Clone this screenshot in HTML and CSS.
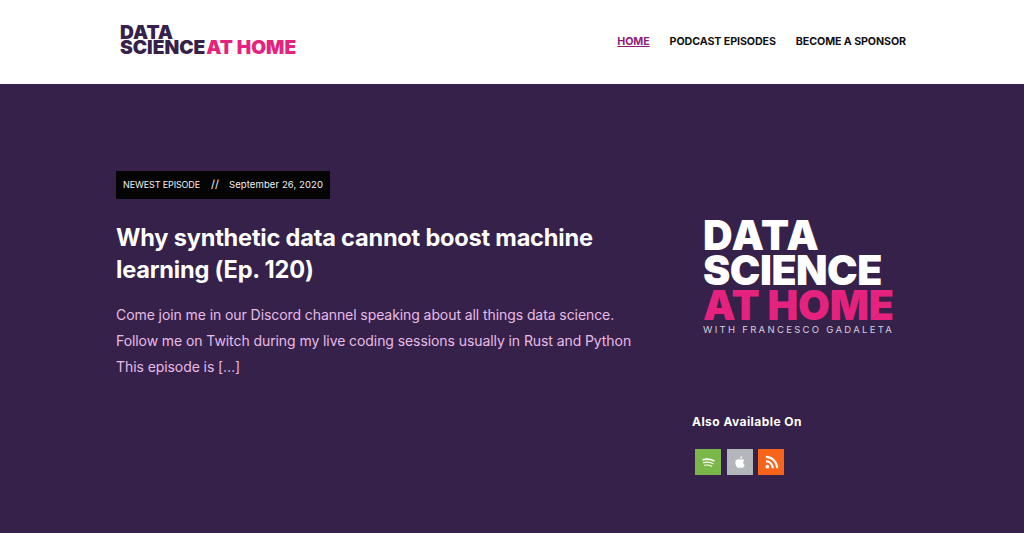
FILE: index.html
```html
<!DOCTYPE html>
<html lang="en">
<head>
<meta charset="utf-8">
<title>Data Science at Home</title>
<link rel="stylesheet" href="styles.css">
</head>
<body>
<header class="site-header">
  <a class="brand" href="#">
    <span class="brand-line">DATA</span>
    <span class="brand-line">SCIENCE<span class="brand-pink">AT HOME</span></span>
  </a>
  <nav class="nav">
    <a class="nav-link nav-current" href="#">HOME</a>
    <a class="nav-link" href="#">PODCAST EPISODES</a>
    <a class="nav-link" href="#">BECOME A SPONSOR</a>
  </nav>
</header>
<main class="hero">
  <article class="post">
    <div class="meta"><span class="meta-kind">NEWEST EPISODE</span><span class="meta-sep">//</span><span class="meta-date">September 26, 2020</span></div>
    <h1 class="post-title">Why synthetic data cannot boost machine learning (Ep. 120)</h1>
    <p class="excerpt">Come join me in our Discord channel speaking about all things data science.<br>Follow me on Twitch during my live coding sessions usually in Rust and Python<br>This episode is […]</p>
  </article>
  <aside class="side">
    <div class="cover">
      <div class="cover-line cover-data">DATA</div>
      <div class="cover-line">SCIENCE</div>
      <div class="cover-line cover-pink">AT HOME</div>
      <div class="cover-sub">WITH FRANCESCO GADALETA</div>
    </div>
    <h2 class="side-title">Also Available On</h2>
    <div class="badges">
      <a class="badge badge-spotify" href="#" aria-label="Spotify">
        <svg viewBox="0 0 16 16" width="15" height="15" fill="none" stroke="#fff" stroke-linecap="round"><path d="M2.2 5C6 4 10.4 4.4 13.8 6.1" stroke-width="1.7"/><path d="M2.8 8.1C6 7.3 9.8 7.6 12.8 9.2" stroke-width="1.4"/><path d="M3.6 11C6.2 10.4 9 10.7 11.4 12" stroke-width="1.1"/></svg>
      </a>
      <a class="badge badge-apple" href="#" aria-label="Apple Podcasts">
        <svg viewBox="0 0 16 16" width="16" height="16" fill="#fff"><path d="M11.2 8.4c0-1.4 1.1-2 1.2-2.1-.7-1-1.7-1.1-2.1-1.1-.9-.1-1.7.5-2.2.5s-1.2-.5-1.9-.5c-1 0-1.9.6-2.4 1.4-1 1.8-.3 4.4.7 5.8.5.7 1.1 1.5 1.8 1.5s1-.5 1.9-.5 1.1.5 1.9.5 1.3-.7 1.8-1.4c.6-.8.8-1.6.8-1.6s-1.5-.6-1.5-2.5z"/><path d="M9.7 4.1c.4-.5.7-1.2.6-1.9-.6 0-1.3.4-1.7.9-.4.4-.7 1.1-.6 1.8.7 0 1.3-.3 1.7-.8z"/></svg>
      </a>
      <a class="badge badge-rss" href="#" aria-label="RSS">
        <svg viewBox="0 0 16 16" width="15" height="15" fill="none" stroke="#fff" stroke-width="2.2"><circle cx="3.6" cy="12.4" r="2" fill="#fff" stroke="none"/><path d="M2 6.6a7.4 7.4 0 0 1 7.4 7.4"/><path d="M2 2a12 12 0 0 1 12 12"/></svg>
      </a>
    </div>
  </aside>
</main>
</body>
</html>
```
FILE: styles.css
```css
* { box-sizing: border-box; }
html, body { margin: 0; height: 100%; }
body {
  display: flex;
  flex-direction: column;
  height: 533px;
  overflow: hidden;
  font-family: "Inter", "Noto Sans", sans-serif;
  background: #35214a;
}
a { text-decoration: none; color: inherit; }

.site-header {
  flex: 0 0 84px;
  background: #fff;
  display: flex;
  align-items: center;
  justify-content: space-between;
  padding: 0 118px 5px 120px;
}
.brand {
  display: flex;
  flex-direction: column;
  font-weight: 900;
  font-size: 19.2px;
  line-height: 15.5px;
  letter-spacing: 0;
  color: #35214a;
  padding-top: 1px;
}
.brand-line { display: block; white-space: nowrap; }
.brand-pink { color: #e5237e; margin-left: 1px; }
.nav { display: flex; gap: 20px; margin-top: 5px; }
.nav-link {
  font-size: 10.7px;
  font-weight: 700;
  line-height: 16px;
  letter-spacing: -0.1px;
  color: #111;
  white-space: nowrap;
}
.nav-current { color: #8e1c75; text-decoration: underline; }

.hero {
  flex: 1;
  display: flex;
  padding: 87px 0 0 116px;
  background: #35214a;
}
.post { width: 576px; flex: none; }
.meta {
  display: flex;
  width: 214px;
  align-items: center;
  height: 28px;
  padding: 0 0 2px 7px;
  background: #050505;
  color: #f0f0f0;
  white-space: nowrap;
}
.meta-kind { font-size: 9px; letter-spacing: -0.12px; }
.meta-sep { margin: 0 10px 0 11px; font-size: 11px; }
.meta-date { font-size: 9.5px; letter-spacing: 0.1px; }
.post-title {
  margin: 23px 0 0;
  width: 500px;
  font-size: 23.6px;
  line-height: 32px;
  font-weight: 700;
  letter-spacing: -0.22px;
  color: #fff;
}
.excerpt {
  margin: 16.4px 0 0;
  font-size: 14px;
  line-height: 26px;
  letter-spacing: -0.08px;
  color: #e8bbe6;
  white-space: nowrap;
}
.side { flex: none; width: 220px; padding-top: 47px; }
.cover { margin-left: 11px; }
.cover-line {
  font-weight: 900;
  font-size: 41px;
  line-height: 35px;
  letter-spacing: -0.5px;
  color: #fff;
  white-space: nowrap;
}
.cover-data { letter-spacing: 0.8px; }
.cover-pink { color: #e5237e; letter-spacing: -0.2px; }
.cover-sub {
  margin-top: 1px;
  font-size: 9.5px;
  line-height: 12px;
  letter-spacing: 2.3px;
  color: #d8d0dc;
  white-space: nowrap;
}
.side-title {
  margin: 77px 0 0;
  font-size: 12px;
  line-height: 18px;
  font-weight: 700;
  letter-spacing: 0.45px;
  color: #fff;
}
.badges { display: flex; gap: 5.5px; margin: 18px 0 0 3px; }
.badge {
  width: 26px;
  height: 26px;
  display: flex;
  align-items: center;
  justify-content: center;
}
.badge-spotify { background: #7ab648; }
.badge-apple { background: #b3b7bc; }
.badge-rss { background: #f7641a; }
```
